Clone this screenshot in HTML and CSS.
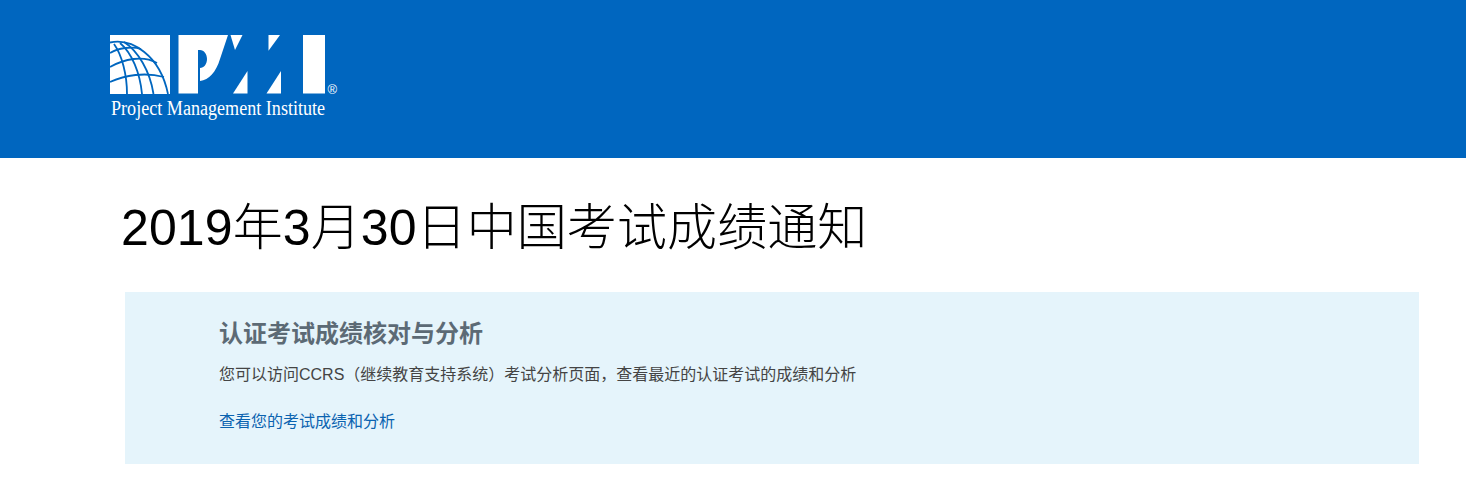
FILE: index.html
```html
<!DOCTYPE html>
<html lang="zh-CN">
<head>
    <meta charset="UTF-8">
    <title>2019年3月30日中国考试成绩通知</title>
    <link rel="stylesheet" href="styles.css">
</head>
<body>
    <header class="top-bar">
        <div class="logo">
            <svg class="logo-mark" width="230" height="62" viewBox="0 0 230 62">
                <!-- globe -->
                <rect x="0" y="0" width="60" height="59" fill="#fff"/>
                <g fill="none" stroke="#0066bf" stroke-width="1.8">
                    <path d="M0 7.5C22 3 50 20 58 59"/>
                    <path d="M14 7C28 16 40 36 43.5 59"/>
                    <path d="M10 8C22 18 30 38 32 59"/>
                    <path d="M4 9C12 20 17 40 17 59"/>
                    <path d="M0 18C8 13 22 11 31 14"/>
                    <path d="M0 32C14 24 33 20 47 28"/>
                    <path d="M0 47C15 40 35 37 54 42"/>
                </g>
                <!-- P, M, I -->
                <g fill="#fff">
                    <path d="M68.5 0H118L110 24C106 37 99 45 90 46V33C94 33 97 29 97 24C97 19 94 15 90 15H88V58.5H68.5Z"/>
                    <path d="M120.5 0H132.5L125 15Z"/>
                    <path d="M123 58.5L137.5 36V58.5Z"/>
                    <path d="M158.5 0H170L158.5 15.7Z"/>
                    <path d="M156.5 58.5L171 36V58.5Z"/>
                    <rect x="193" y="0" width="22" height="58.5"/>
                </g>
                <text class="logo-reg" x="217.5" y="59">®</text>
            </svg>
            <div class="logo-name">Project Management Institute</div>
        </div>
    </header>
    <main class="content">
        <h1 class="page-title">2019年3月30日中国考试成绩通知</h1>
        <section class="notice">
            <h2 class="notice-title">认证考试成绩核对与分析</h2>
            <p class="notice-text">您可以访问CCRS（继续教育支持系统）考试分析页面，查看最近的认证考试的成绩和分析</p>
            <a class="notice-link" href="#">查看您的考试成绩和分析</a>
        </section>
    </main>
</body>
</html>
```

FILE: styles.css
```css
* {
    margin: 0;
    padding: 0;
    box-sizing: border-box;
}

body {
    background-color: #ffffff;
    font-family: "Liberation Sans", "Noto Sans CJK SC", sans-serif;
}

.top-bar {
    height: 158px;
    background-color: #0066bf;
    padding: 35px 0 0 110px;
}

.logo {
    width: 230px;
}

.logo-mark {
    display: block;
}

.logo-reg {
    font-size: 13px;
    fill: #ffffff;
}

.logo-name {
    margin-left: 1px;
    font-family: "Liberation Serif", serif;
    font-size: 20px;
    line-height: 22px;
    color: #ffffff;
    white-space: nowrap;
    transform: scaleX(0.905);
    transform-origin: left center;
}

.content {
    padding: 40px 47px 0 121px;
}

.page-title {
    font-size: 50px;
    font-weight: 300;
    line-height: 60px;
    letter-spacing: 0.1px;
    color: #000000;
}

.notice {
    margin: 34px 0 0 4px;
    height: 172px;
    padding: 26px 0 0 94px;
    background-color: #e5f4fb;
}

.notice-title {
    font-size: 24px;
    line-height: 32px;
    font-weight: bold;
    color: #5c6a75;
}

.notice-text {
    margin-top: 14px;
    font-size: 16px;
    line-height: 22px;
    color: #444444;
}

.notice-link {
    display: block;
    margin-top: 25px;
    font-size: 16px;
    line-height: 22px;
    color: #0b63b0;
    text-decoration: none;
}
```
